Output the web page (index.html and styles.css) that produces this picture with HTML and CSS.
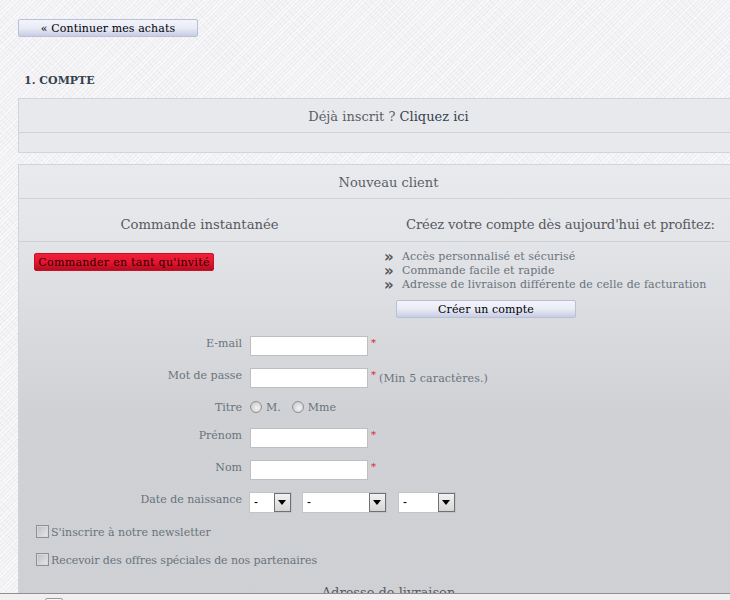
FILE: index.html
```html
<!DOCTYPE html>
<html lang="fr">
<head>
<meta charset="utf-8">
<title>Compte</title>
<link rel="stylesheet" href="styles.css">
</head>
<body>
<div class="page">
  <a class="btn btn-back">« Continuer mes achats</a>
  <h2 class="step">1. COMPTE</h2>
  <section class="panel panel-login">
    <div class="panel-head">Déjà inscrit ? <span class="link">Cliquez ici</span></div>
    <div class="panel-empty"></div>
  </section>
  <section class="panel panel-new">
    <div class="panel-head">Nouveau client</div>
    <div class="cols cols-head">
      <h3>Commande instantanée</h3>
      <h3>Créez votre compte dès aujourd'hui et profitez:</h3>
    </div>
    <div class="cols cols-body">
      <div class="col-left"><a class="btn-red">Commander en tant qu'invité</a></div>
      <div class="col-right">
        <ul class="perks">
          <li>Accès personnalisé et sécurisé</li>
          <li>Commande facile et rapide</li>
          <li>Adresse de livraison différente de celle de facturation</li>
        </ul>
        <a class="btn btn-create">Créer un compte</a>
      </div>
    </div>
    <div class="form">
      <div class="row row-email"><label>E-mail</label><span class="field"></span><i class="req">*</i></div>
      <div class="row row-pass"><label>Mot de passe</label><span class="field"></span><i class="req">*</i><span class="hint">(Min 5 caractères.)</span></div>
      <div class="row row-title"><label>Titre</label><span class="radio"></span><span class="opt">M.</span><span class="radio radio-2"></span><span class="opt">Mme</span></div>
      <div class="row row-first"><label>Prénom</label><span class="field"></span><i class="req">*</i></div>
      <div class="row row-last"><label>Nom</label><span class="field"></span><i class="req">*</i></div>
      <div class="row row-date"><label>Date de naissance</label>
        <span class="select sel-day">-<b class="arrow"></b></span>
        <span class="select sel-month">-<b class="arrow"></b></span>
        <span class="select sel-year">-<b class="arrow"></b></span>
      </div>
      <div class="check check-news"><span class="box"></span>S'inscrire à notre newsletter</div>
      <div class="check check-offers"><span class="box"></span>Recevoir des offres spéciales de nos partenaires</div>
    </div>
    <h3 class="ship">Adresse de livraison</h3>
  </section>
</div>
<div class="statusbar"><span class="status-box"></span></div>
</body>
</html>
```

FILE: styles.css
```css
* { box-sizing: border-box; }
html, body { margin: 0; height: 600px; overflow: hidden; }
body {
  font-family: "DejaVu Serif", "Liberation Serif", serif;
  font-size: 11px;
  color: #68737d;
  background-color: #f1f1f4;
  background-image:
    repeating-linear-gradient(135deg, rgba(255,255,255,.6) 0 1px, transparent 1px 3px),
    repeating-linear-gradient(45deg, rgba(210,210,222,.2) 0 1px, transparent 1px 5px);
}
.page { width: 760px; padding: 19px 0 0 18px; }
.btn {
  display: block;
  height: 18px;
  border: 1px solid #b9c0d6;
  border-radius: 2px;
  background: linear-gradient(#f3f4fb, #e9ebf6 50%, #c8cde5);
  color: #000;
  font-size: 11px;
  line-height: 17px;
  letter-spacing: .1px;
  text-align: center;
}
.btn-back { width: 180px; }
.step {
  margin: 36px 0 0 6px;
  height: 25px;
  font-size: 11px;
  line-height: 15px;
  font-weight: bold;
  color: #36424f;
}
.panel {
  width: 740px;
  border: 1px solid #d3d4d8;
  border-right: 0;
  background: #e8e9ec;
}
.panel-head {
  height: 34px;
  border-bottom: 1px solid #d0d1d6;
  text-align: center;
  font-size: 13px;
  line-height: 35px;
  color: #5b5f66;
}
.link { color: #36424f; }
.panel-empty { height: 19px; }
.panel-new {
  margin-top: 11px;
  height: 440px;
  background: linear-gradient(#e9eaed 0, #e5e6e9 60px, #d0d1d4 250px, #cfd0d3 100%);
}
.cols { display: grid; grid-template-columns: 361px 379px; }
.cols-head { height: 43px; border-bottom: 1px solid #ced0d4; }
.cols-head h3 {
  margin: 0;
  font-weight: normal;
  font-size: 13.2px;
  line-height: 52px;
  color: #55595f;
  text-align: center;
}
.cols-head h3:last-child { text-align: left; padding-left: 26px; letter-spacing: -.18px; }
.cols-body { height: 94px; }
.btn-red {
  display: block;
  width: 180px;
  height: 18px;
  margin: 11px 0 0 15px;
  border: 1px solid #c8102a;
  border-radius: 2px;
  background: linear-gradient(#f0203a, #e8152e 50%, #b30d20);
  color: #2a0004;
  font-size: 11px;
  line-height: 17px;
  letter-spacing: .3px;
  text-align: center;
}
.perks { list-style: none; margin: 8px 0 0; padding: 0 0 0 22px; }
.perks li {
  position: relative;
  height: 14px;
  line-height: 14px;
  letter-spacing: .07px;
  color: #68737d;
}
.perks li::before {
  content: "»";
  position: absolute;
  left: -18px;
  top: 0;
  font-family: "DejaVu Sans", sans-serif;
  font-size: 15px;
  font-weight: bold;
  color: #55595f;
}
.btn-create { width: 180px; margin: 8px 0 0 16px; }
.row {
  display: flex;
  align-items: flex-start;
  height: 20px;
}
.row label { width: 223px; text-align: right; margin: 1px 8px 0 0; line-height: 14px; }
.field {
  width: 118px;
  height: 20px;
  background: #fff;
  border: 1px solid #bdbfc3;
}
.req { margin-left: 3px; color: #e3132c; font-style: normal; font-size: 10px; line-height: 14px; }
.hint { margin-left: 3px; line-height: 22px; letter-spacing: .1px; }
.row-pass { margin-top: 12px; }
.row-title { margin-top: 11px; height: 16px; }
.row-title label { line-height: 16px; }
.radio {
  width: 12px;
  height: 12px;
  margin-top: 2px;
  border: 1px solid #8e9094;
  border-radius: 50%;
  background: radial-gradient(circle at 60% 60%, #f4f4f4, #bfc0c3);
}
.radio-2 { margin-left: 11px; }
.opt { margin-left: 4px; line-height: 18px; }
.row-first { margin-top: 13px; }
.row-last { margin-top: 12px; }
.row-date { margin-top: 12px; }
.select {
  position: relative;
  display: block;
  height: 19px;
  margin-top: 1px;
  background: #fff;
  color: #000;
  font-family: "Liberation Sans", sans-serif;
  font-size: 12px;
  line-height: 19px;
  padding-left: 4px;
  outline: 1px solid #c3c4c8;
}
.sel-day { width: 41px; }
.sel-month { width: 83px; margin-left: 12px; }
.sel-year { width: 56px; margin-left: 13px; }
.arrow {
  position: absolute;
  right: 0;
  top: 0;
  width: 17px;
  height: 19px;
  border: 1px solid #6f7073;
  background: linear-gradient(#f2f2f2, #d6d6d6);
}
.arrow::after {
  content: "";
  position: absolute;
  left: 3px;
  top: 6px;
  border-left: 4px solid transparent;
  border-right: 4px solid transparent;
  border-top: 5px solid #000;
}
.check {
  display: flex;
  height: 14px;
  margin: 0 0 0 17px;
  line-height: 16px;
}
.check-news { margin-top: 13px; }
.check-offers { margin-top: 14px; letter-spacing: -.08px; }
.box {
  width: 13px;
  height: 13px;
  margin-right: 2px;
  border: 1px solid #8e9094;
  background: linear-gradient(135deg, #bcbdc0, #e9e9ea);
  box-shadow: inset 0 0 0 1px #d8d8da;
}
.ship {
  margin: 18px 0 0;
  font-weight: normal;
  font-size: 13px;
  line-height: 16px;
  color: #55595f;
  text-align: center;
}
.statusbar {
  position: fixed;
  left: 0;
  right: 0;
  bottom: 0;
  height: 7px;
  background: #f0f0f0;
  border-top: 1px solid #8f9093;
}
.status-box {
  position: absolute;
  left: 45px;
  top: 4px;
  width: 18px;
  height: 12px;
  border: 1px solid #9a9a9a;
  border-radius: 2px;
  background: #f6f6f6;
}
```
